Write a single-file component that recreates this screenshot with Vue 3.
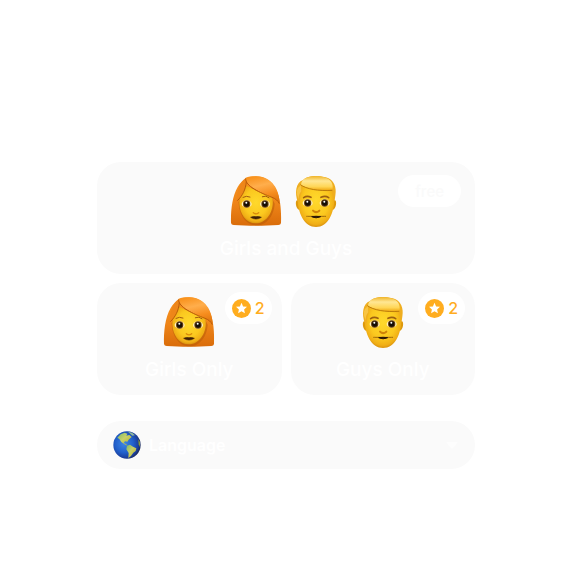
<script setup>
const cards = [
  { label: 'Girls and Guys', faces: ['woman', 'man'], cost: 0, wide: true },
  { label: 'Girls Only', faces: ['woman'], cost: 2, wide: false },
  { label: 'Guys Only', faces: ['man'], cost: 2, wide: false },
]
</script>

<template>
  <svg class="defs" aria-hidden="true">
    <defs>
      <linearGradient id="hairW" x1="0" y1="0" x2="0" y2="1">
        <stop offset="0" stop-color="#f99420" /><stop offset="0.55" stop-color="#ee8418" /><stop offset="1" stop-color="#d96c0a" />
      </linearGradient>
      <linearGradient id="fringeW" x1="0.3" y1="0" x2="0.6" y2="1">
        <stop offset="0" stop-color="#f9921c" /><stop offset="0.35" stop-color="#ffae4c" /><stop offset="0.7" stop-color="#f68d1e" /><stop offset="1" stop-color="#e0760e" />
      </linearGradient>
      <radialGradient id="skin" cx="0.5" cy="0.45" r="0.58">
        <stop offset="0" stop-color="#ffd92c" /><stop offset="0.6" stop-color="#fbc81f" /><stop offset="0.85" stop-color="#f0ae16" /><stop offset="1" stop-color="#cf850a" />
      </radialGradient>
      <linearGradient id="hairM" x1="0" y1="0" x2="0" y2="1">
        <stop offset="0" stop-color="#f0b428" /><stop offset="0.35" stop-color="#ffe794" /><stop offset="0.75" stop-color="#ffd656" /><stop offset="1" stop-color="#f0a912" />
      </linearGradient>
      <radialGradient id="sea" cx="0.4" cy="0.45" r="0.6">
        <stop offset="0" stop-color="#3f86e4" /><stop offset="0.55" stop-color="#2160cb" /><stop offset="0.85" stop-color="#1b409f" /><stop offset="1" stop-color="#1b2b5e" />
      </radialGradient>
      <linearGradient id="land" x1="0" y1="0" x2="1" y2="1">
        <stop offset="0" stop-color="#79b86c" /><stop offset="0.45" stop-color="#c9d068" /><stop offset="1" stop-color="#b9ae20" />
      </linearGradient>
      <g id="eye">
        <ellipse rx="15" ry="11" fill="#fff3c4" />
        <circle r="11" fill="#6b400f" />
        <circle r="8" fill="#150d05" />
        <circle cx="-1" cy="-4" r="3" fill="#fff" />
      </g>
      <symbol id="woman" viewBox="0 0 156 156">
        <path d="M3 144C2 108 6 65 23 36C37 12 57 4 78 4C105 4 125 18 138 43C153 72 154 112 153 144Q152 150 145 150C102 153 53 153 11 150Q4 150 3 144Z" fill="url(#hairW)" />
        <path d="M26 82L38 49L78 34L120 58L134 86C132 121 110 151 79 151C47 151 27 119 26 82Z" fill="#b45a05" opacity="0.5" />
        <path d="M28 84C28 67 35 46 49 32L82 48L127 66C135 109 109 145 78 145C47 145 29 116 28 84Z" fill="url(#skin)" />
        <path d="M46 10C32 20 20 43 20 79C36 65 47 41 50 15Z" fill="#ee8619" />
        <path d="M47 8C45 31 91 53 126 66C136 70 145 77 149 84C148 46 127 3 77 4C64 4 55 5 47 8Z" fill="url(#fringeW)" />
        <path d="M47 10C45 33 91 54 126 67C137 71 145 78 148 86M49 20C47 44 37 63 22 77" fill="none" stroke="#b95a08" stroke-width="3" />
        <path d="M39 67Q49 61 60 66M97 65Q108 60 117 68" fill="none" stroke="#a25a10" stroke-width="3" stroke-linecap="round" />
        <use href="#eye" x="50" y="87" /><use href="#eye" x="105" y="87" />
        <path d="M70 113Q78 120 86 113" fill="none" stroke="#d98a0a" stroke-width="4" stroke-linecap="round" />
        <path d="M62 127Q70 123 78 125Q86 123 94 127Q78 137 62 127Z" fill="#402006" stroke="#402006" stroke-width="2" />
      </symbol>
      <symbol id="man" viewBox="0 0 156 156">
        <path d="M24 76C14 71 16 101 28 105L37 76ZM132 76C142 71 140 101 128 105L119 76Z" fill="#dd990d" />
        <path d="M23 66C24 33 47 13 78 13C109 13 132 33 133 66C134 116 112 156 78 156C44 156 22 116 23 66Z" fill="url(#skin)" />
        <path d="M24 82C13 55 17 22 39 15C49 3 78 0 98 5C125 6 139 28 137 52C136 66 134 76 132 82L126 46L98 45C65 45 49 38 36 31L35 51Q30 60 29 82Z" fill="#efae20" />
        <path d="M33 29C34 16 45 4 77 3C119 3 132 23 127 45C84 48 50 41 33 29Z" fill="url(#hairM)" />
        <path d="M31 29C49 42 84 49 127 46" fill="none" stroke="#bd7c0b" stroke-width="3" />
        <path d="M20 49Q24 36 33 30L34 49Q26 57 26 73Q20 62 20 49Z" fill="#f8c543" />
        <path d="M41 68Q51 61 63 67M93 67Q106 61 116 68" fill="none" stroke="#9c5f10" stroke-width="5" stroke-linecap="round" />
        <use href="#eye" x="53" y="84" /><use href="#eye" x="104" y="84" />
        <path d="M69 107Q78 116 88 107" fill="none" stroke="#cf8408" stroke-width="6" stroke-linecap="round" />
        <path d="M50 124L53 124Q66 124 78 124Q92 124 104 124L107 124" fill="none" stroke="#a06a0c" stroke-width="3" stroke-linecap="round" />
        <path d="M65 125Q78 123 92 125Q78 132 65 125Z" fill="#2b1705" stroke="#2b1705" stroke-width="3" />
      </symbol>
    </defs>
  </svg>

  <main class="page">
    <div class="cards">
      <button
        v-for="card in cards"
        :key="card.label"
        type="button"
        class="card"
        :class="{ wide: card.wide }"
      >
        <span class="faces">
          <svg v-for="face in card.faces" :key="face" class="face" aria-hidden="true">
            <use :href="'#' + face" />
          </svg>
        </span>
        <span class="label">{{ card.label }}</span>
        <span v-if="card.cost" class="badge cost">
          <svg class="coin" viewBox="0 0 19 19" aria-hidden="true">
            <circle cx="9.5" cy="9.5" r="9.5" fill="#ffad1f" />
            <path d="M9.5 3.8L11.1 7.4L15 7.8L12.1 10.4L12.9 14.3L9.5 12.3L6.1 14.3L6.9 10.4L4 7.8L7.9 7.4Z" fill="#fff" />
          </svg>
          <span>{{ card.cost }}</span>
        </span>
        <span v-else class="badge free">free</span>
      </button>
    </div>

    <button type="button" class="language">
      <svg class="globe" viewBox="0 0 84 84" aria-hidden="true">
        <circle cx="42" cy="42" r="41" fill="url(#sea)" />
        <path d="M13 20L23 10L35 5L43 8L40 14L49 12L56 18L48 25L43 32L36 31L32 36L40 40L43 44L35 40L25 33L19 24Z" fill="url(#land)" />
        <path d="M45 2L57 5L66 13L58 14L52 9Z" fill="#8fb79b" />
        <path d="M42 44L51 41L60 47L70 52L68 60L61 65L54 75L46 81L47 66L40 55Z" fill="url(#land)" />
        <path d="M76 25L81 34L81 48L77 40Z" fill="#8b9b3b" />
      </svg>
      <span>Language</span>
      <svg class="caret" viewBox="0 0 12 7" aria-hidden="true">
        <path d="M1 0H11Q12 0 11.3 1L7 6Q6 7 5 6L0.7 1Q0 0 1 0Z" fill="#fdfdfd" />
      </svg>
    </button>
  </main>
</template>

<style>
body {
  margin: 0;
  background: #fff;
}
</style>

<style scoped>
.defs {
  position: absolute;
  width: 0;
  height: 0;
}

.page {
  display: flex;
  flex-direction: column;
  gap: 26px;
  padding: 162px 89px 96px 97px;
  font-family: Inter, "Liberation Sans", sans-serif;
}

.cards {
  display: grid;
  grid-template-columns: 1fr 1fr;
  gap: 9px;
}

button {
  border: 0;
  margin: 0;
  font-family: inherit;
  color: #fff;
  background: #fafafa;
  cursor: pointer;
}

.card {
  position: relative;
  display: flex;
  flex-direction: column;
  align-items: center;
  gap: 9px;
  padding: 13px 12px 12px;
  border-radius: 24px;
}

.wide {
  grid-column: 1 / -1;
}

.faces {
  display: flex;
  gap: 8px;
}

.face {
  display: block;
  width: 52px;
  height: 52px;
}

.label {
  font-size: 19px;
  line-height: 26px;
  font-weight: 500;
}

.badge {
  position: absolute;
  display: flex;
  align-items: center;
  height: 32px;
  border-radius: 16px;
  background: #fff;
  font-weight: 500;
}

.free {
  top: 13px;
  right: 14px;
  padding: 0 17px;
  font-size: 15px;
  color: #fafafa;
}

.cost {
  top: 9px;
  right: 10px;
  gap: 4px;
  padding: 0 7px;
  font-size: 16px;
  color: #ffad1f;
}

.coin {
  width: 19px;
  height: 19px;
}

.language {
  display: flex;
  align-items: center;
  gap: 8px;
  height: 48px;
  padding: 0 17px 0 16px;
  border-radius: 24px;
  font-size: 16px;
  font-weight: 600;
}

.globe {
  width: 28px;
  height: 28px;
}

.caret {
  width: 12px;
  height: 7px;
  margin-left: auto;
}
</style>
